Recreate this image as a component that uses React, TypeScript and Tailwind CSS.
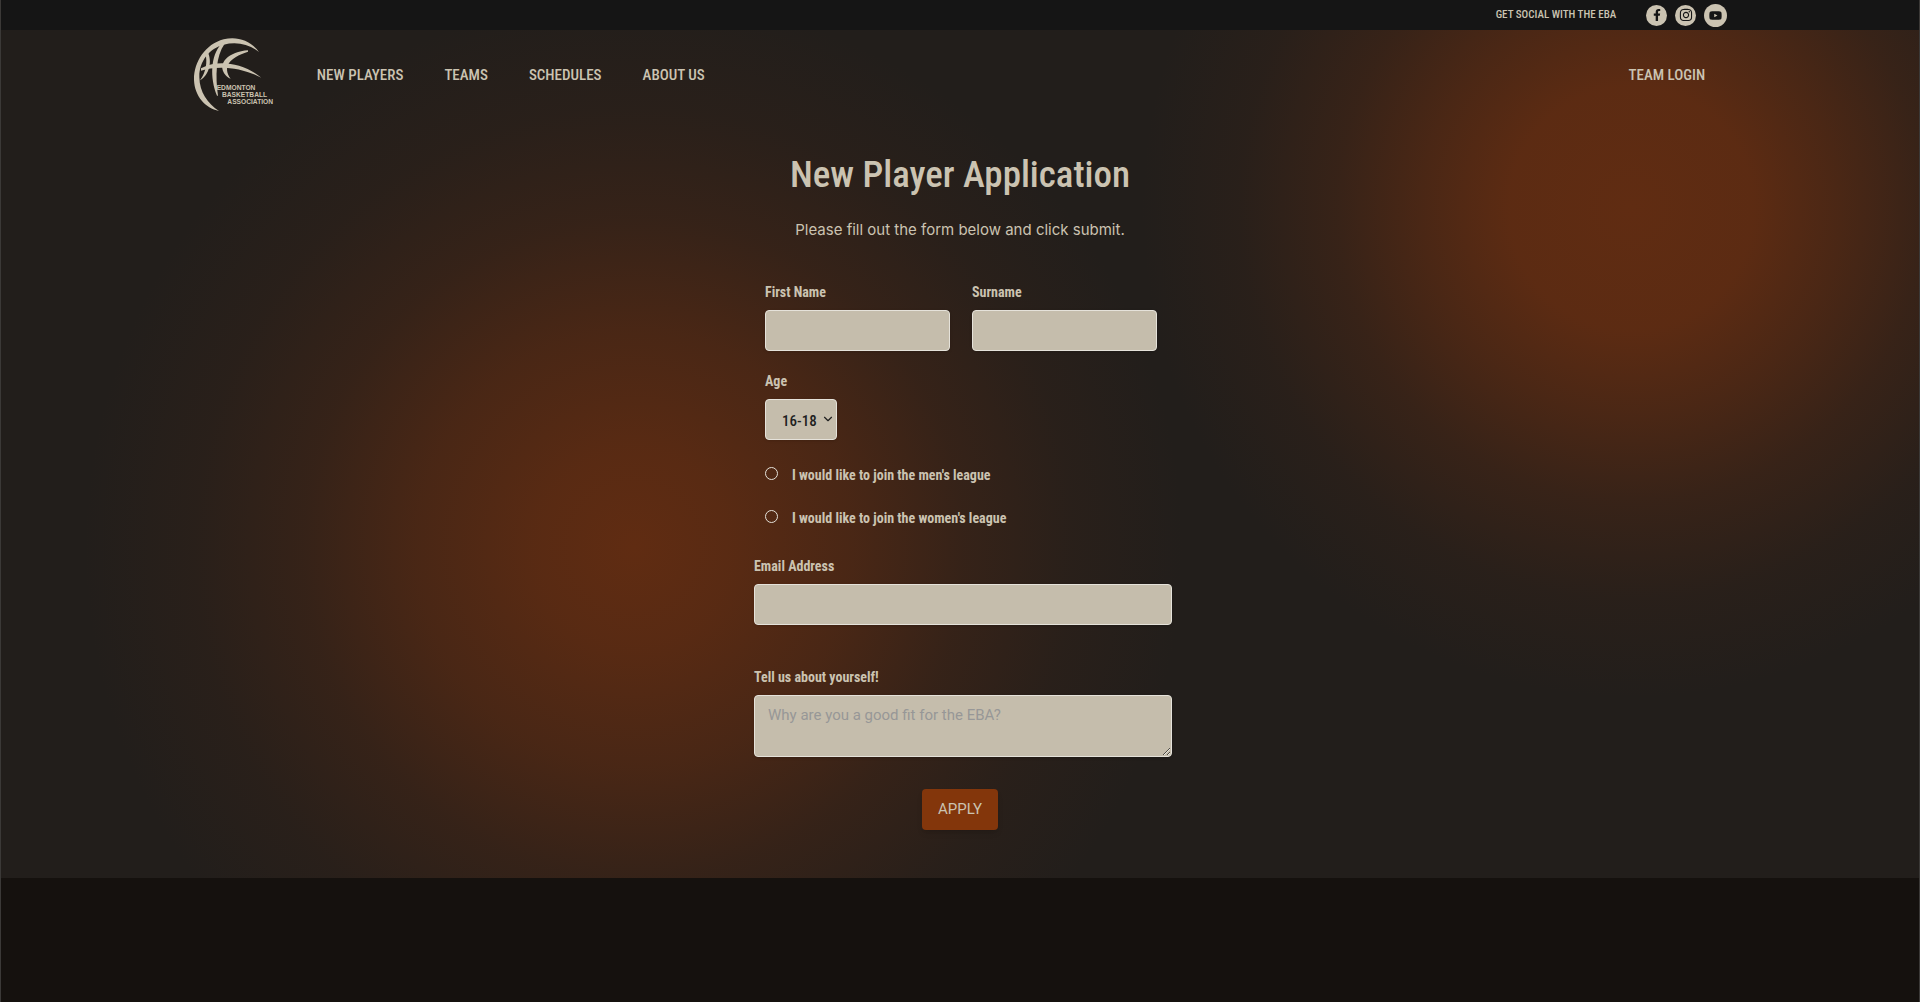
import React, { useState } from 'react';
import { FaFacebookF, FaInstagram, FaYoutube } from 'react-icons/fa';
import { ChevronDown } from 'lucide-react';

const NAV_LINKS = ['New Players', 'Teams', 'Schedules', 'About Us'];
const AGE_GROUPS = ['16-18', '19-25', '26-35', '36+'];

const labelClass = 'block text-sm leading-6 font-bold';
const fieldClass = 'block w-full rounded border border-[#e5e2da] bg-[#c5bdac] text-[#1f1f1f] outline-none shadow';

const Logo: React.FC = () => (
    <svg viewBox="0 0 330 300" className="h-[100px] w-[110px]" role="img" aria-label="Edmonton Basketball Association" fill="#cbc3b1">
        <path d="M234 81C208 46 168 33 128 43C72 58 38 112 39 165C41 214 73 249 114 258C79 235 56 202 55 157C54 109 85 70 128 59C166 49 205 57 234 81Z" />
        <path d="M120 58C89 92 86 158 108 212L111 212C103 152 104 94 131 56Z" />
        <path d="M60 130C105 104 181 109 241 158C184 127 110 120 60 137Z" />
        <path d="M201 76C145 79 104 116 134 151C139 157 144 160 149 161C124 127 143 98 201 80Z" />
        <path d="M73 85C80 111 75 143 57 166C85 151 95 108 79 79Z" />
        <g fontFamily='"Liberation Sans", Arial, sans-serif' fontWeight="700" fontSize="20">
            <text x="107" y="196">EDMONTON</text>
            <text x="123" y="216">BASKETBALL</text>
            <text x="139" y="236">ASSOCIATION</text>
        </g>
    </svg>
);

const TopBar: React.FC = () => (
    <div className="flex h-[30px] items-center justify-end bg-[#151515] pr-[10%]">
        <span className="mr-[30px] text-[11px] font-medium uppercase">Get social with the EBA</span>
        <div className="flex items-center gap-2 text-[#151515]">
            <a href="#facebook" aria-label="Facebook" className="flex size-[21px] items-center justify-center rounded-full bg-[#cbc3b1]">
                <FaFacebookF size={12} />
            </a>
            <a href="#instagram" aria-label="Instagram" className="flex size-[21px] items-center justify-center rounded-full bg-[#cbc3b1]">
                <FaInstagram size={14} />
            </a>
            <a href="#youtube" aria-label="YouTube" className="flex size-[23px] items-center justify-center rounded-full bg-[#cbc3b1]">
                <FaYoutube size={13} />
            </a>
        </div>
    </div>
);

const Header: React.FC = () => (
    <header className="flex h-[90px] items-center px-[10%] uppercase">
        <a href="#home" className="-ml-3">
            <Logo />
        </a>
        <nav className="ml-[26px] flex gap-[41px] text-[15px] font-medium">
            {NAV_LINKS.map(link => (
                <a key={link} href="#nav" className="hover:underline">{link}</a>
            ))}
        </nav>
        <a href="#login" className="mr-[22px] ml-auto text-[15px] font-medium hover:underline">Team Login</a>
    </header>
);

const ApplicationForm: React.FC = () => {
    const [formData, setFormData] = useState({ firstName: '', surname: '', age: '16-18', league: '', email: '', about: '' });

    const handleChange = (e: React.ChangeEvent<HTMLInputElement | HTMLTextAreaElement | HTMLSelectElement>) => {
        const { name, value } = e.target;
        setFormData(prev => ({ ...prev, [name]: value }));
    };

    return (
        <form onSubmit={e => e.preventDefault()} className="ml-1.5 w-full max-w-[418px]">
            <div className="pr-[15px] pl-[11px]">
                <div className="grid grid-cols-2 gap-[22px]">
                    <div>
                        <label htmlFor="firstName" className={labelClass}>First Name</label>
                        <input id="firstName" name="firstName" value={formData.firstName} onChange={handleChange} className={`${fieldClass} mt-1.5 h-[41px] px-3`} />
                    </div>
                    <div>
                        <label htmlFor="surname" className={labelClass}>Surname</label>
                        <input id="surname" name="surname" value={formData.surname} onChange={handleChange} className={`${fieldClass} mt-1.5 h-[41px] px-3`} />
                    </div>
                </div>

                <div className="mt-[18px]">
                    <label htmlFor="age" className={labelClass}>Age</label>
                    <div className="relative mt-1.5 w-[72px]">
                        <select id="age" name="age" value={formData.age} onChange={handleChange} className={`${fieldClass} h-[41px] appearance-none pt-1 pl-4 text-[15px] font-medium`}>
                            {AGE_GROUPS.map(age => <option key={age}>{age}</option>)}
                        </select>
                        <ChevronDown size={14} strokeWidth={2} className="pointer-events-none absolute top-[13px] right-[2px] text-[#1f1f1f]" />
                    </div>
                </div>

                <div className="mt-[23px] flex flex-col gap-[19px]">
                    {['men', 'women'].map(league => (
                        <label key={league} className="flex items-center gap-[14px] text-sm leading-6 font-bold">
                            <input
                                type="radio"
                                name="league"
                                value={league}
                                checked={formData.league === league}
                                onChange={handleChange}
                                className="mb-1 size-[13px] appearance-none rounded-full border border-[#e5e2da] checked:bg-[#cbc3b1]"
                            />
                            I would like to join the {league}'s league
                        </label>
                    ))}
                </div>
            </div>

            <div className="mt-6">
                <label htmlFor="email" className={labelClass}>Email Address</label>
                <input id="email" name="email" type="email" value={formData.email} onChange={handleChange} className={`${fieldClass} mt-1.5 h-[41px] px-3`} />
            </div>

            <div className="mt-10">
                <label htmlFor="about" className={labelClass}>Tell us about yourself!</label>
                <textarea
                    id="about"
                    name="about"
                    placeholder="Why are you a good fit for the EBA?"
                    value={formData.about}
                    onChange={handleChange}
                    className={`${fieldClass} mt-1.5 h-[62px] px-[13px] py-2 font-[Roboto,sans-serif] text-[15px] placeholder:text-[#979797]`}
                />
            </div>

            <div className="mt-8 mr-1.5 flex justify-center">
                <button type="submit" className="h-[41px] rounded bg-[#83360b] px-4 font-[Roboto,sans-serif] text-[15px] uppercase shadow-md hover:bg-[#9a400d]">
                    Apply
                </button>
            </div>
        </form>
    );
};

const App: React.FC = () => {
    return (
        <div className="min-h-screen border-x border-[#3b3937] bg-[#15110e] font-['Roboto_Condensed','Liberation_Sans_Narrow',sans-serif] text-[#cbc3b1]">
            <TopBar />
            <div className="bg-[#221e1b] bg-[radial-gradient(circle_550px_at_33%_61%,#602c12,#602c12e0_18%,#602c12a0_40%,#602c1250_60%,#602c121c_80%,#602c1200),radial-gradient(circle_490px_at_85%_21%,#602c12,#602c12ee_25%,#602c12a8_42%,#602c1258_60%,#602c121c_80%,#602c1200)]">
                <Header />
                <main className="flex flex-col items-center px-4 pt-8 pb-12">
                    <h1 className="text-[37px] leading-[46px] font-medium">New Player Application</h1>
                    <p className="mt-5 mb-[38px] font-[Inter,sans-serif] text-[15px] leading-6">Please fill out the form below and click submit.</p>
                    <ApplicationForm />
                </main>
            </div>
        </div>
    );
};

export default App;
